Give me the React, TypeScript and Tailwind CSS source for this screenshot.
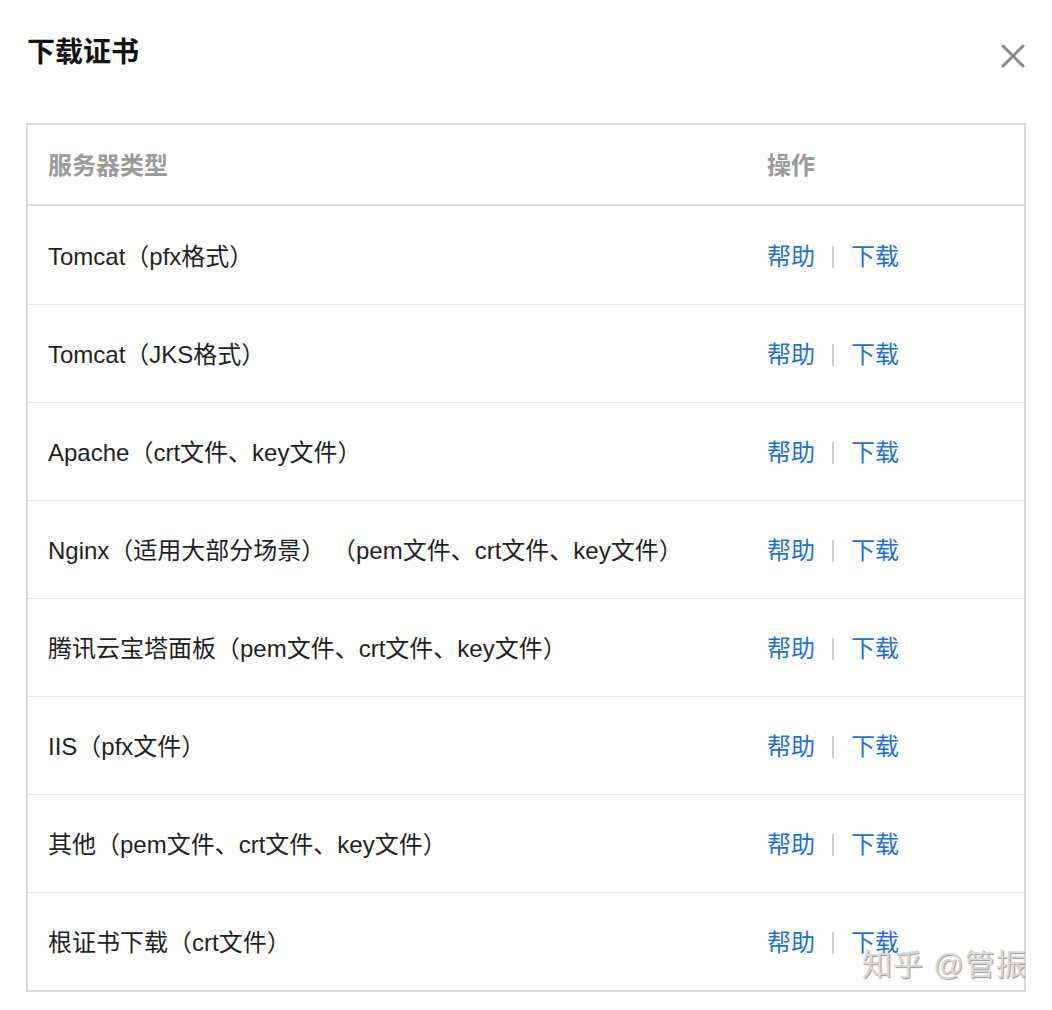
import React from "react";

const rows = [
  "Tomcat（pfx格式）",
  "Tomcat（JKS格式）",
  "Apache（crt文件、key文件）",
  "Nginx（适用大部分场景） （pem文件、crt文件、key文件）",
  "腾讯云宝塔面板（pem文件、crt文件、key文件）",
  "IIS（pfx文件）",
  "其他（pem文件、crt文件、key文件）",
  "根证书下载（crt文件）",
];

export default function App() {
  return (
    <div
      className="relative w-[1052px] h-[1010px] bg-white overflow-hidden"
      style={{ fontFamily: '"Liberation Sans", "Noto Sans CJK SC", sans-serif' }}
    >
      <div className="flex items-start justify-between pl-[27px] pr-[27px] pt-[35px] h-[123px]">
        <div className="text-[28px] font-bold text-[#111] leading-[36px]">下载证书</div>
        <svg width="24" height="24" viewBox="0 0 24 24" className="mt-[9px]">
          <path d="M2 2 L22 22 M22 2 L2 22" stroke="#8a8a8a" strokeWidth="3" strokeLinecap="round" />
        </svg>
      </div>
      <div className="ml-[26px] w-[1000px] border-2 border-[#d6dae0] flex flex-col">
        <div className="flex items-center h-[81px] pt-[3px] border-b-2 border-[#d6dae0] text-[24px] font-bold text-[#9a9a9a]">
          <div className="flex-1 pl-[20px]">服务器类型</div>
          <div className="w-[257px]">操作</div>
        </div>
        {rows.map((r, i) => (
          <div
            key={i}
            className={`flex items-center h-[98px] pt-[3px] text-[24px] text-[#1f1f1f] ${i > 0 ? "border-t border-[#e6e6e6]" : ""}`}
          >
            <div className="flex-1 pl-[20px] whitespace-pre">{r}</div>
            <div className="w-[257px] flex items-center text-[#1f6fd6]">
              <span>帮助</span>
              <span className="mx-[17px] w-[2px] h-[22px] bg-[#cfcfcf]" />
              <span>下载</span>
            </div>
          </div>
        ))}
      </div>
      <div
        className="absolute left-[862px] top-[942px] text-[30px] text-[#d8d8d8] tracking-[1px]"
        style={{ textShadow: "1px 1px 1px #9a9a9a" }}
      >
        知乎 @管振
      </div>
    </div>
  );
}
